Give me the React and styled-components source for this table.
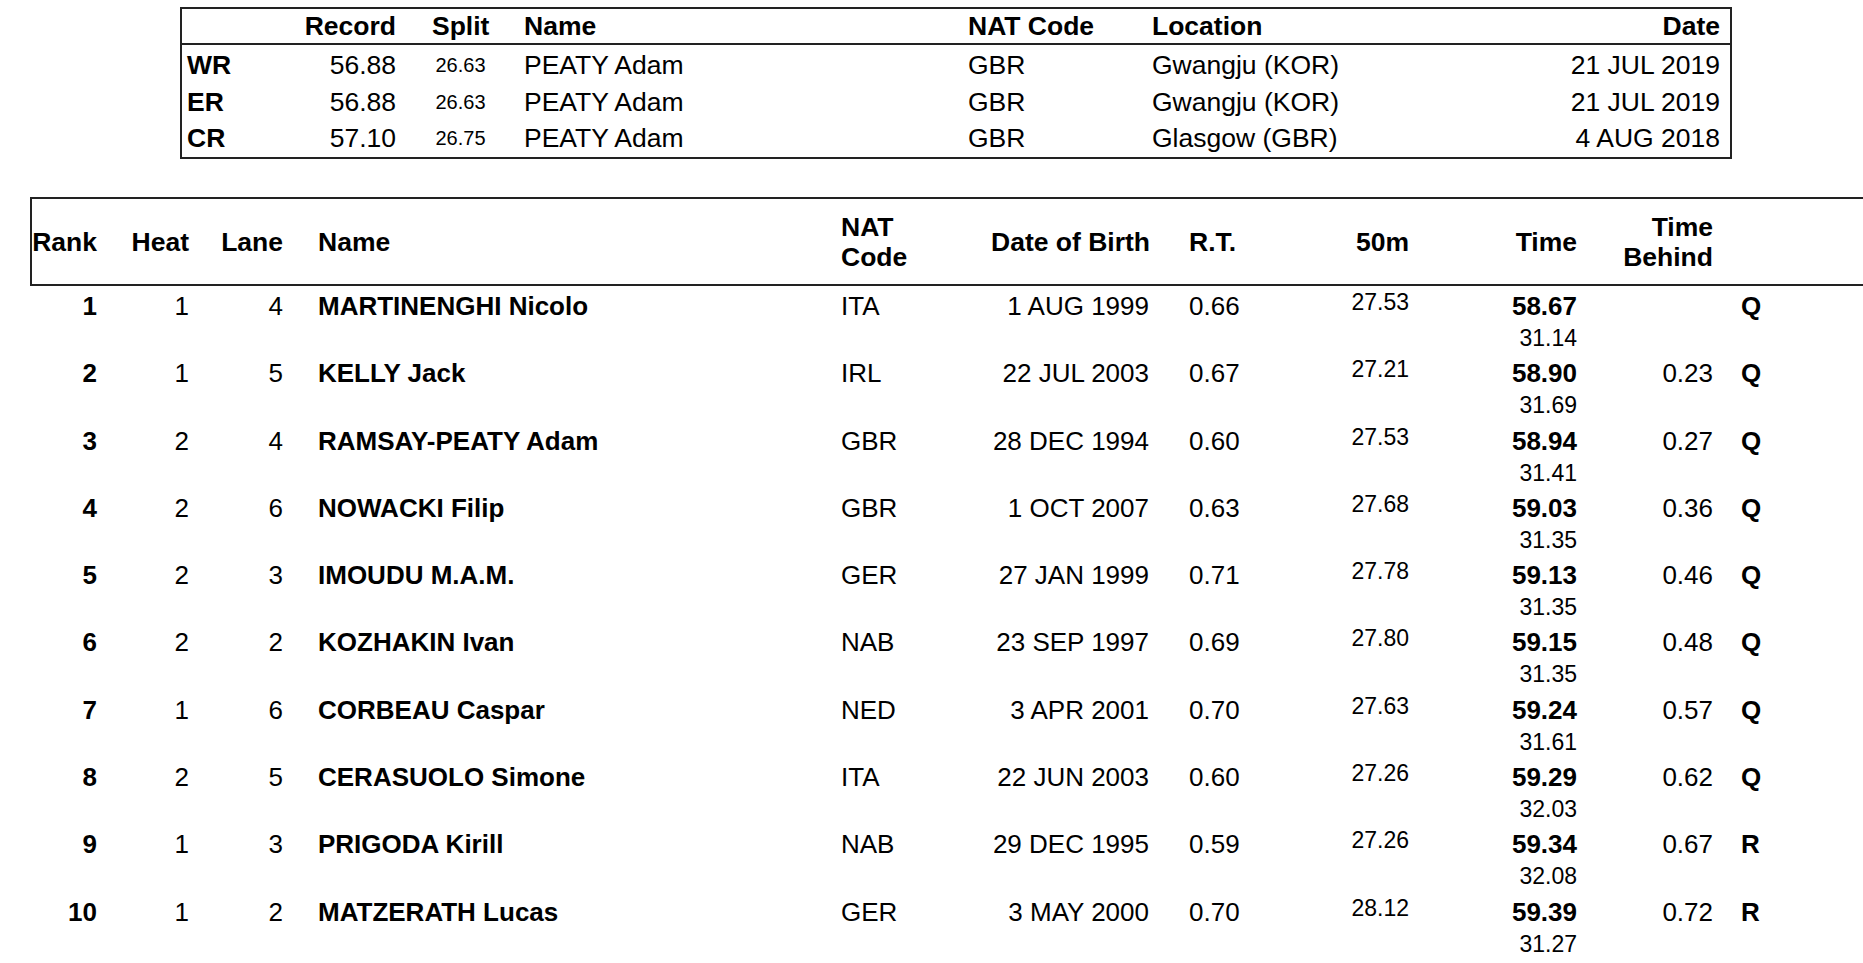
import React from 'react'
import styled, { createGlobalStyle } from 'styled-components'

const GlobalStyle = createGlobalStyle`
    html, body {
        margin: 0;
        padding: 0;
        background: #fff;
        overflow: hidden;
    }
    body {
        font-family: "Liberation Sans", Arial, Helvetica, sans-serif;
        color: #000;
    }
`

const records = [
    { label: 'WR', record: '56.88', split: '26.63', name: 'PEATY Adam', nat: 'GBR', location: 'Gwangju (KOR)', date: '21 JUL 2019' },
    { label: 'ER', record: '56.88', split: '26.63', name: 'PEATY Adam', nat: 'GBR', location: 'Gwangju (KOR)', date: '21 JUL 2019' },
    { label: 'CR', record: '57.10', split: '26.75', name: 'PEATY Adam', nat: 'GBR', location: 'Glasgow (GBR)', date: '4 AUG 2018' },
]

const results = [
    ['1', '1', '4', 'MARTINENGHI Nicolo', 'ITA', '1 AUG 1999', '0.66', '27.53', '58.67', '31.14', '', 'Q'],
    ['2', '1', '5', 'KELLY Jack', 'IRL', '22 JUL 2003', '0.67', '27.21', '58.90', '31.69', '0.23', 'Q'],
    ['3', '2', '4', 'RAMSAY-PEATY Adam', 'GBR', '28 DEC 1994', '0.60', '27.53', '58.94', '31.41', '0.27', 'Q'],
    ['4', '2', '6', 'NOWACKI Filip', 'GBR', '1 OCT 2007', '0.63', '27.68', '59.03', '31.35', '0.36', 'Q'],
    ['5', '2', '3', 'IMOUDU M.A.M.', 'GER', '27 JAN 1999', '0.71', '27.78', '59.13', '31.35', '0.46', 'Q'],
    ['6', '2', '2', 'KOZHAKIN Ivan', 'NAB', '23 SEP 1997', '0.69', '27.80', '59.15', '31.35', '0.48', 'Q'],
    ['7', '1', '6', 'CORBEAU Caspar', 'NED', '3 APR 2001', '0.70', '27.63', '59.24', '31.61', '0.57', 'Q'],
    ['8', '2', '5', 'CERASUOLO Simone', 'ITA', '22 JUN 2003', '0.60', '27.26', '59.29', '32.03', '0.62', 'Q'],
    ['9', '1', '3', 'PRIGODA Kirill', 'NAB', '29 DEC 1995', '0.59', '27.26', '59.34', '32.08', '0.67', 'R'],
    ['10', '1', '2', 'MATZERATH Lucas', 'GER', '3 MAY 2000', '0.70', '28.12', '59.39', '31.27', '0.72', 'R'],
]

/* records box */

const Page = styled.div`
    padding-top: 7px;
    height: 963px;
    box-sizing: border-box;
`

const RecordBox = styled.div`
    margin-left: 180px;
    width: 1552px;
    border: 2px solid #222;
    box-sizing: border-box;
`

const RecordRow = styled.div`
    display: grid;
    grid-template-columns: 120px 94px 93px 479px 184px 348px 230px;
    height: ${p => (p.$head ? '34px' : '36.5px')};
    line-height: ${p => (p.$head ? '34px' : '36.5px')};
    font-size: 26.5px;
    font-weight: ${p => (p.$head ? 700 : 400)};
    border-bottom: ${p => (p.$head ? '2px solid #222' : 'none')};
    padding-top: ${p => (p.$first ? '2px' : '0')};
`

const RCell = styled.div`
    text-align: ${p => p.$align || 'left'};
    padding-left: ${p => p.$pl || 0}px;
    padding-right: ${p => p.$pr || 0}px;
    font-size: ${p => p.$size || 'inherit'};
    font-weight: ${p => (p.$bold ? 700 : 'inherit')};
    white-space: nowrap;
`

/* results table */

const ResultHead = styled.div`
    margin-top: 38px;
    margin-left: 30px;
    height: 89px;
    width: 1900px;
    border: 2px solid #222;
    border-right: none;
    box-sizing: border-box;
    display: grid;
    grid-template-columns: 65px 92px 94px 558px 150px 158px 151px 109px 168px 136px 87px;
    align-items: center;
    font-size: 26.5px;
    font-weight: 700;
    line-height: 30px;
`

const HeadCell = styled.div`
    text-align: ${p => p.$align || 'left'};
    padding-left: ${p => p.$pl || 0}px;
    padding-top: 1px;
    white-space: nowrap;
`

const Body = styled.div`
    margin-left: 32px;
`

const ResultRow = styled.div`
    display: grid;
    grid-template-columns: 65px 92px 94px 558px 150px 158px 151px 109px 168px 136px 87px;
    height: 67.3px;
    padding-top: 5.5px;
    box-sizing: border-box;
    font-size: 26px;
    line-height: 31px;
    align-items: start;
`

const Cell = styled.div`
    text-align: ${p => p.$align || 'left'};
    padding-left: ${p => p.$pl || 0}px;
    font-weight: ${p => (p.$bold ? 700 : 400)};
    white-space: nowrap;
`

const Fifty = styled(Cell)`
    font-size: 23px;
    line-height: 23px;
`

const SplitLine = styled.div`
    font-weight: 400;
    font-size: 23px;
    line-height: 33px;
`

const headCols = [
    { t: 'Rank', a: 'right' },
    { t: 'Heat', a: 'right' },
    { t: 'Lane', a: 'right' },
    { t: 'Name', pl: 35 },
    { t: ['NAT', 'Code'] },
    { t: 'Date of Birth', a: 'right' },
    { t: 'R.T.', pl: 40 },
    { t: '50m', a: 'right' },
    { t: 'Time', a: 'right' },
    { t: ['Time', 'Behind'], a: 'right' },
    { t: '', pl: 28 },
]

const App = () => {
    return (
        <Page>
            <GlobalStyle />
            <RecordBox>
                <RecordRow $head>
                    <RCell />
                    <RCell $align="right">Record</RCell>
                    <RCell $align="center" $pl={36}>Split</RCell>
                    <RCell $pl={35}>Name</RCell>
                    <RCell>NAT Code</RCell>
                    <RCell>Location</RCell>
                    <RCell $align="right" $pr={10}>Date</RCell>
                </RecordRow>
                {records.map((r, i) => (
                    <RecordRow key={r.label} $first={i === 0}>
                        <RCell $pl={5} $bold>{r.label}</RCell>
                        <RCell $align="right">{r.record}</RCell>
                        <RCell $align="center" $pl={36} $size="20px">{r.split}</RCell>
                        <RCell $pl={35}>{r.name}</RCell>
                        <RCell>{r.nat}</RCell>
                        <RCell>{r.location}</RCell>
                        <RCell $align="right" $pr={10}>{r.date}</RCell>
                    </RecordRow>
                ))}
            </RecordBox>

            <ResultHead>
                {headCols.map((c, i) => (
                    <HeadCell key={i} $align={c.a} $pl={c.pl}>
                        {Array.isArray(c.t) ? (
                            <>
                                {c.t[0]}
                                <br />
                                {c.t[1]}
                            </>
                        ) : c.t}
                    </HeadCell>
                ))}
            </ResultHead>

            <Body>
                {results.map(r => (
                    <ResultRow key={r[0]}>
                        <Cell $align="right" $bold>{r[0]}</Cell>
                        <Cell $align="right">{r[1]}</Cell>
                        <Cell $align="right">{r[2]}</Cell>
                        <Cell $pl={35} $bold>{r[3]}</Cell>
                        <Cell>{r[4]}</Cell>
                        <Cell $align="right">{r[5]}</Cell>
                        <Cell $pl={40}>{r[6]}</Cell>
                        <Fifty $align="right">{r[7]}</Fifty>
                        <Cell $align="right" $bold>
                            {r[8]}
                            <SplitLine>{r[9]}</SplitLine>
                        </Cell>
                        <Cell $align="right">{r[10]}</Cell>
                        <Cell $pl={28} $bold>{r[11]}</Cell>
                    </ResultRow>
                ))}
            </Body>
        </Page>
    )
}

export default App
